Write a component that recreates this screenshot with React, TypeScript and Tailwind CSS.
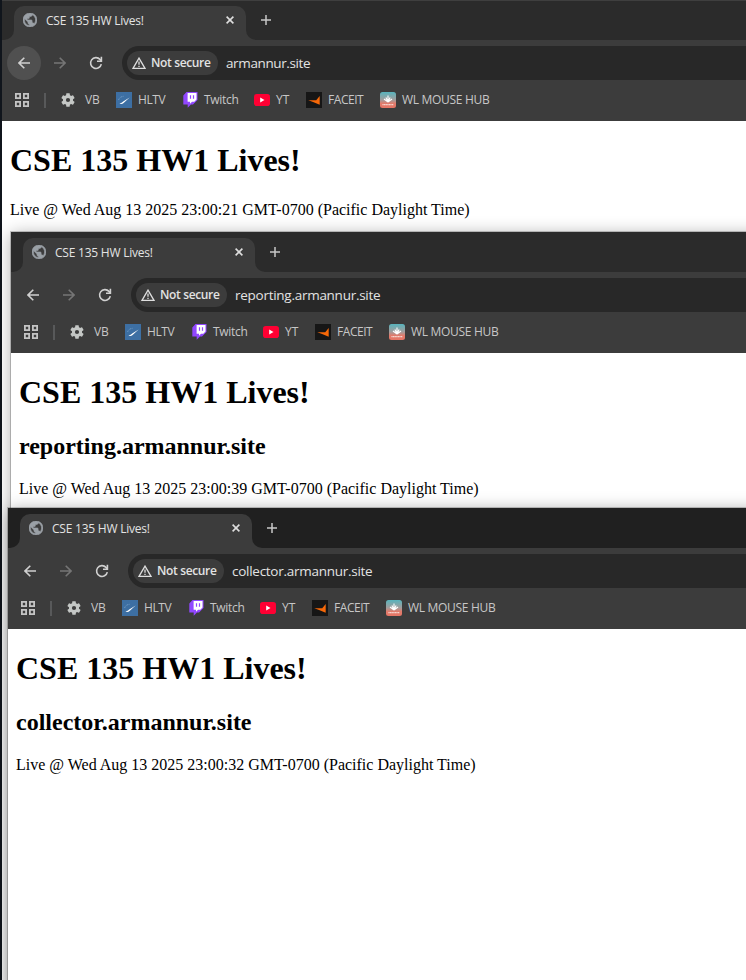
import type { ReactNode } from "react";

function Globe() {
  return (
    <svg width="14" height="14" viewBox="2 2 20 20" fill="#9aa0a6" stroke="#9aa0a6" strokeWidth=".9">
      <path d="M12 2C6.48 2 2 6.48 2 12s4.48 10 10 10 10-4.48 10-10S17.52 2 12 2zm-1 17.93c-3.95-.49-7-3.85-7-7.93 0-.62.08-1.21.21-1.79L9 15v1c0 1.1.9 2 2 2v1.93zm6.9-2.54c-.26-.81-1-1.39-1.9-1.39h-1v-3c0-.55-.45-1-1-1H8v-2h2c.55 0 1-.45 1-1V7h2c1.1 0 2-.9 2-2v-.41c2.93 1.19 5 4.06 5 7.41 0 2.08-.8 3.97-2.1 5.39z" />
    </svg>
  );
}

function Cross() {
  return (
    <svg width="8" height="8" viewBox="0 0 8 8" stroke="#dedede" strokeWidth="1.6">
      <path d="M.6.6 7.4 7.4M7.4.6.6 7.4" />
    </svg>
  );
}

function Plus() {
  return (
    <svg width="10" height="10" viewBox="0 0 10 10" stroke="#c7c7c7" strokeWidth="1.5">
      <path d="M5 0V10M0 5H10" />
    </svg>
  );
}

function Arrow({ forward = false }: { forward?: boolean }) {
  return (
    <svg width="12" height="12" viewBox="0 0 12 12" fill="none" stroke={forward ? "#757575" : "#d0d0d0"} strokeWidth="1.6" className={forward ? "rotate-180" : ""}>
      <path d="M12 6H1.2M6.3.7 1 6l5.3 5.3" />
    </svg>
  );
}

function Reload() {
  return (
    <svg width="14" height="14" viewBox="0 0 14 14" fill="none" stroke="#d0d0d0" strokeWidth="1.6">
      <path d="M12.3 8.1A5.4 5.4 0 1 1 11 3.4L12.2 4.7" />
      <path d="M12.4.8V5.2H8" />
    </svg>
  );
}

function Warning() {
  return (
    <svg width="14" height="12" viewBox="0 0 14 12" fill="none" stroke="#dedede" strokeWidth="1.3">
      <path d="M7 1.1 13 11.3H1Z" />
      <path d="M7 4.5V7.8M7 8.7V10" />
    </svg>
  );
}

function AppsGrid() {
  return (
    <svg width="14" height="14" viewBox="0 0 14 14" fill="none" stroke="#c4c4c4" strokeWidth="1.8">
      <path d="M.9.9H5.1V5.1H.9ZM8.9.9H13.1V5.1H8.9ZM.9 8.9H5.1V13.1H.9ZM8.9 8.9H13.1V13.1H8.9Z" />
    </svg>
  );
}

function Gear() {
  return (
    <svg width="14" height="14" viewBox="2 2 20 20" fill="#c4c7c5">
      <path d="M19.14 12.94c.04-.3.06-.61.06-.94 0-.32-.02-.64-.07-.94l2.03-1.58c.18-.14.23-.41.12-.61l-1.92-3.32c-.12-.22-.37-.29-.59-.22l-2.39.96c-.5-.38-1.03-.7-1.62-.94l-.36-2.54c-.04-.24-.24-.41-.48-.41h-3.84c-.24 0-.43.17-.47.41l-.36 2.54c-.59.24-1.13.57-1.62.94l-2.39-.96c-.22-.08-.47 0-.59.22L2.74 8.87c-.12.21-.08.47.12.61l2.03 1.58c-.05.3-.09.63-.09.94s.02.64.07.94l-2.03 1.58c-.18.14-.23.41-.12.61l1.92 3.32c.12.22.37.29.59.22l2.39-.96c.5.38 1.03.7 1.62.94l.36 2.54c.05.24.24.41.48.41h3.84c.24 0 .44-.17.47-.41l.36-2.54c.59-.24 1.13-.56 1.62-.94l2.39.96c.22.08.47 0 .59-.22l1.92-3.32c.12-.22.07-.47-.12-.61l-2.01-1.58zM12 15a3 3 0 1 1 0-6 3 3 0 0 1 0 6z" />
    </svg>
  );
}

function Hltv() {
  return (
    <svg width="16" height="16" viewBox="0 0 16 16">
      <path d="M0 0H16V16H0Z" fill="#3d6fa3" />
      <path d="M3.5 11.2Q5.5 12.9 7.6 11L13.6 5.6 7.2 9.4Q6 10.8 3.5 11.2Z" fill="#fff" />
      <path d="M2.6 8Q3.6 4.8 7.5 4.3" fill="none" stroke="#82a7cb" strokeWidth=".8" strokeDasharray="1.2 .7" />
    </svg>
  );
}

function Twitch() {
  return (
    <svg width="15" height="16" viewBox="0 0 15 16">
      <path d="M3.5 0H14.5V8L10 12.4H8L4.7 15.8V12.4H.3V3.4Z" fill="#9147ff" />
      <path d="M4.6 1H13.5V7.5L11.3 9.8H9L7 11.7V9.8H4.6Z" fill="#fff" />
      <path d="M7.5 3.2V6.7M10.5 3.2V6.7" stroke="#9147ff" strokeWidth="1.2" />
    </svg>
  );
}

function YouTube() {
  return (
    <svg width="16" height="12" viewBox="0 0 16 12">
      <rect width="16" height="12" rx="2.8" fill="#ff0033" />
      <path d="M6.2 3.6 10.5 6 6.2 8.4Z" fill="#fff" />
    </svg>
  );
}

function Faceit() {
  return (
    <svg width="16" height="16" viewBox="0 0 16 16">
      <path d="M0 0H16V16H0Z" fill="#161616" />
      <path d="M13.7 3.9V12.8Q8.5 10.3 2.3 8.2H10.2Z" fill="#f76808" />
    </svg>
  );
}

function Mouse() {
  return (
    <svg width="16" height="16" viewBox="0 0 16 16">
      <defs>
        <linearGradient id="mouse" x1="0" y1="0" x2="0" y2="1">
          <stop stopColor="#58b4bd" />
          <stop offset=".5" stopColor="#a49c9b" />
          <stop offset=".72" stopColor="#e17b6c" />
          <stop offset="1" stopColor="#e67565" />
        </linearGradient>
      </defs>
      <rect width="16" height="16" rx="2.5" fill="url(#mouse)" />
      <path d="M8 10V3.6M8 10 5.9 5.6M8 10 10.1 5.6M8 10 4 7M8 10 12 7" fill="none" stroke="#fff" strokeWidth="1.1" />
      <path d="M2.4 12.7H13.6" stroke="#f6d5ce" strokeWidth="1.2" strokeDasharray="1.3 .3" />
    </svg>
  );
}

function Bookmark({ icon, label, className, textClass }: { icon: ReactNode; label: string; className: string; textClass: string }) {
  return (
    <div className={`flex shrink-0 items-center ${className}`}>
      <span className="flex w-[22px] shrink-0">{icon}</span>
      <span className={`text-[12px] text-[#c7c7c7] ${textClass}`}>{label}</span>
    </div>
  );
}

interface WindowProps {
  url: string;
  urlClass: string;
  subdomain?: string;
  time: string;
  place: string;
  strip: string;
  backActive?: boolean;
}

function BrowserWindow({ url, urlClass, subdomain, time, place, strip, backActive = false }: WindowProps) {
  return (
    <section className={`absolute flex flex-col bg-white ${place}`}>
      <header className="flex h-[121px] shrink-0 flex-col bg-[#3c3c3c] font-['Open_Sans',sans-serif]">
        <div className={`flex h-10 shrink-0 items-end ${strip} ${backActive ? "border-t border-[#3f3f3f]" : ""}`}>
          <div className="h-[34px] w-3 bg-[#3c3c3c]">
            <div className={`h-full w-full rounded-br-[10px] ${strip}`} />
          </div>
          <div className="flex h-[34px] w-[232px] items-center rounded-t-[10px] bg-[#3c3c3c] pb-[6px] pl-[9px] pr-[12px]">
            <Globe />
            <span className="ml-[9px] flex-1 whitespace-nowrap pt-[2px] text-[12px] tracking-[-0.23px] text-[#e3e3e3]">CSE 135 HW Lives!</span>
            <Cross />
          </div>
          <div className="h-[34px] min-w-0 flex-1 bg-[#3c3c3c]">
            <div className={`flex h-full items-center rounded-bl-[10px] pb-[6px] pl-[15px] ${strip}`}>
              <Plus />
            </div>
          </div>
        </div>
        <div className="flex h-[46px] shrink-0 items-center pl-[5px]">
          <div className={`flex size-[34px] items-center justify-center rounded-full ${backActive ? "bg-[#505050]" : ""}`}>
            <Arrow />
          </div>
          <div className="ml-[2px] flex size-[34px] items-center justify-center">
            <Arrow forward />
          </div>
          <div className="ml-[2px] flex size-[34px] items-center justify-center">
            <Reload />
          </div>
          <div className="ml-[9px] flex h-[34px] min-w-0 flex-1 items-center rounded-l-full bg-[#282828] pl-[5px]">
            <div className="flex h-6 w-[91px] shrink-0 items-center rounded-full bg-[#3c3c3c] pl-[5px]">
              <Warning />
              <span className="ml-[5px] whitespace-nowrap text-[12px] font-semibold tracking-[-0.35px] text-[#e3e3e3]">Not secure</span>
            </div>
            <span className={`ml-2 whitespace-nowrap pt-px text-[13.5px] text-[#e3e3e3] ${urlClass}`}>{url}</span>
          </div>
        </div>
        <nav className="flex h-[28px] items-center whitespace-nowrap pl-[13px]">
          <AppsGrid />
          <span className="ml-[15px] mr-[-1px] h-[15px] w-[2px] bg-[#58595a]" />
          <Bookmark icon={<Gear />} label="VB" className="ml-[16px] w-[55px]" textClass="ml-[2px] tracking-[-0.2px]" />
          <Bookmark icon={<Hltv />} label="HLTV" className="w-[67px]" textClass="tracking-[-0.4px]" />
          <Bookmark icon={<Twitch />} label="Twitch" className="w-[71px]" textClass="ml-[-1px] tracking-[-0.3px]" />
          <Bookmark icon={<YouTube />} label="YT" className="w-[52px]" textClass="" />
          <Bookmark icon={<Faceit />} label="FACEIT" className="w-[74px]" textClass="tracking-[-0.45px]" />
          <Bookmark icon={<Mouse />} label="WL MOUSE HUB" className="" textClass="tracking-[-0.3px]" />
        </nav>
      </header>
      <main className="px-2 font-['Liberation_Serif','Times_New_Roman',serif] text-black">
        <h1 className="mt-[21px] text-[32px] font-bold leading-[37px]">CSE 135 HW1 Lives!</h1>
        {subdomain && <h2 className="mt-[21px] text-[24px] font-bold leading-[28px]">{subdomain}</h2>}
        <p className={`whitespace-nowrap text-[16px] leading-[18px] ${subdomain ? "mt-[20px]" : "mt-[22px]"}`}>
          Live @ Wed Aug 13 2025 {time} GMT-0700 (Pacific Daylight Time)
        </p>
      </main>
    </section>
  );
}

export default function App() {
  return (
    <div className="relative h-[980px] w-[746px] overflow-hidden bg-[#10151c]">
      <BrowserWindow
        url="armannur.site"
        urlClass="tracking-[-0.38px]"
        time="23:00:21"
        place="left-[2px] top-0 h-[980px] w-[760px]"
        strip="bg-[#2b2b2b]"
        backActive
      />
      <BrowserWindow
        url="reporting.armannur.site"
        urlClass="tracking-[-0.27px]"
        subdomain="reporting.armannur.site"
        time="23:00:39"
        place="left-[11px] top-[232px] h-[760px] w-[760px] shadow-[0_0_0_1px_rgba(0,0,0,0.2),0_2px_16px_rgba(0,0,0,0.32)]"
        strip="bg-[#2b2b2b]"
      />
      <BrowserWindow
        url="collector.armannur.site"
        urlClass="tracking-[-0.27px]"
        subdomain="collector.armannur.site"
        time="23:00:32"
        place="left-[8px] top-[508px] h-[490px] w-[760px] shadow-[0_0_0_1px_rgba(0,0,0,0.2),0_2px_16px_rgba(0,0,0,0.35)]"
        strip="bg-[#202020]"
      />
    </div>
  );
}
